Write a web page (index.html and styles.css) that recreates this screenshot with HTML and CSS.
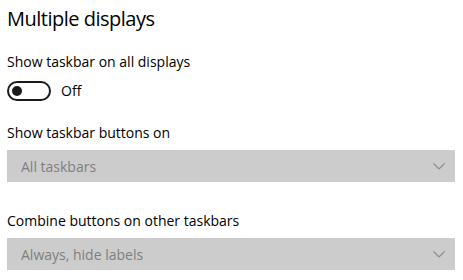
FILE: index.html
```html
<!DOCTYPE html>
<html lang="en">
<head>
<meta charset="utf-8">
<title>Multiple displays</title>
<link rel="stylesheet" href="styles.css">
</head>
<body>
<div class="page">
  <h1 class="title">Multiple displays</h1>
  <div class="label label-first">Show taskbar on all displays</div>
  <div class="toggle-row">
    <span class="toggle"><span class="knob"></span></span>
    <span class="toggle-text">Off</span>
  </div>
  <div class="label label-second">Show taskbar buttons on</div>
  <div class="select">
    <span class="select-text">All taskbars</span>
    <svg class="chevron" width="12" height="7" viewBox="0 0 12 7"><path d="M0.5 0.5 L6 6 L11.5 0.5" fill="none" stroke="#8c8c8c" stroke-width="1.2"/></svg>
  </div>
  <div class="label label-third">Combine buttons on other taskbars</div>
  <div class="select">
    <span class="select-text">Always, hide labels</span>
    <svg class="chevron" width="12" height="7" viewBox="0 0 12 7"><path d="M0.5 0.5 L6 6 L11.5 0.5" fill="none" stroke="#8c8c8c" stroke-width="1.2"/></svg>
  </div>
</div>
</body>
</html>
```
FILE: styles.css
```css
html, body {
  margin: 0;
  padding: 0;
  background: #ffffff;
}
body {
  font-family: "Open Sans", "Noto Sans", "Liberation Sans", sans-serif;
  color: #000000;
}
.page {
  padding: 5px 8px 0 7px;
  display: flex;
  flex-direction: column;
}
.title {
  margin: 0;
  font-size: 20px;
  font-weight: 400;
  line-height: 28px;
  letter-spacing: -0.5px;
}
.label {
  font-size: 14px;
  line-height: 20px;
}
.label-first { margin-top: 19px; }
.label-second { margin-top: 22px; }
.label-third { margin-top: 29px; }
.toggle-row {
  margin-top: 9px;
  display: flex;
  align-items: center;
  gap: 10px;
  height: 20px;
}
.toggle {
  box-sizing: border-box;
  width: 44px;
  height: 20px;
  border: 2px solid #1a1a1a;
  border-radius: 10px;
  display: flex;
  align-items: center;
  padding-left: 3px;
}
.knob {
  width: 10px;
  height: 10px;
  border-radius: 50%;
  background: #1a1a1a;
}
.toggle-text {
  font-size: 14px;
  line-height: 20px;
}
.select {
  margin-top: 7px;
  width: 448px;
  height: 32px;
  background: #cccccc;
  display: flex;
  align-items: center;
  justify-content: space-between;
  padding: 0 10px 0 14px;
  box-sizing: border-box;
}
.select-text {
  font-size: 14px;
  color: #7f7f7f;
}
.chevron {
  display: block;
}
```
